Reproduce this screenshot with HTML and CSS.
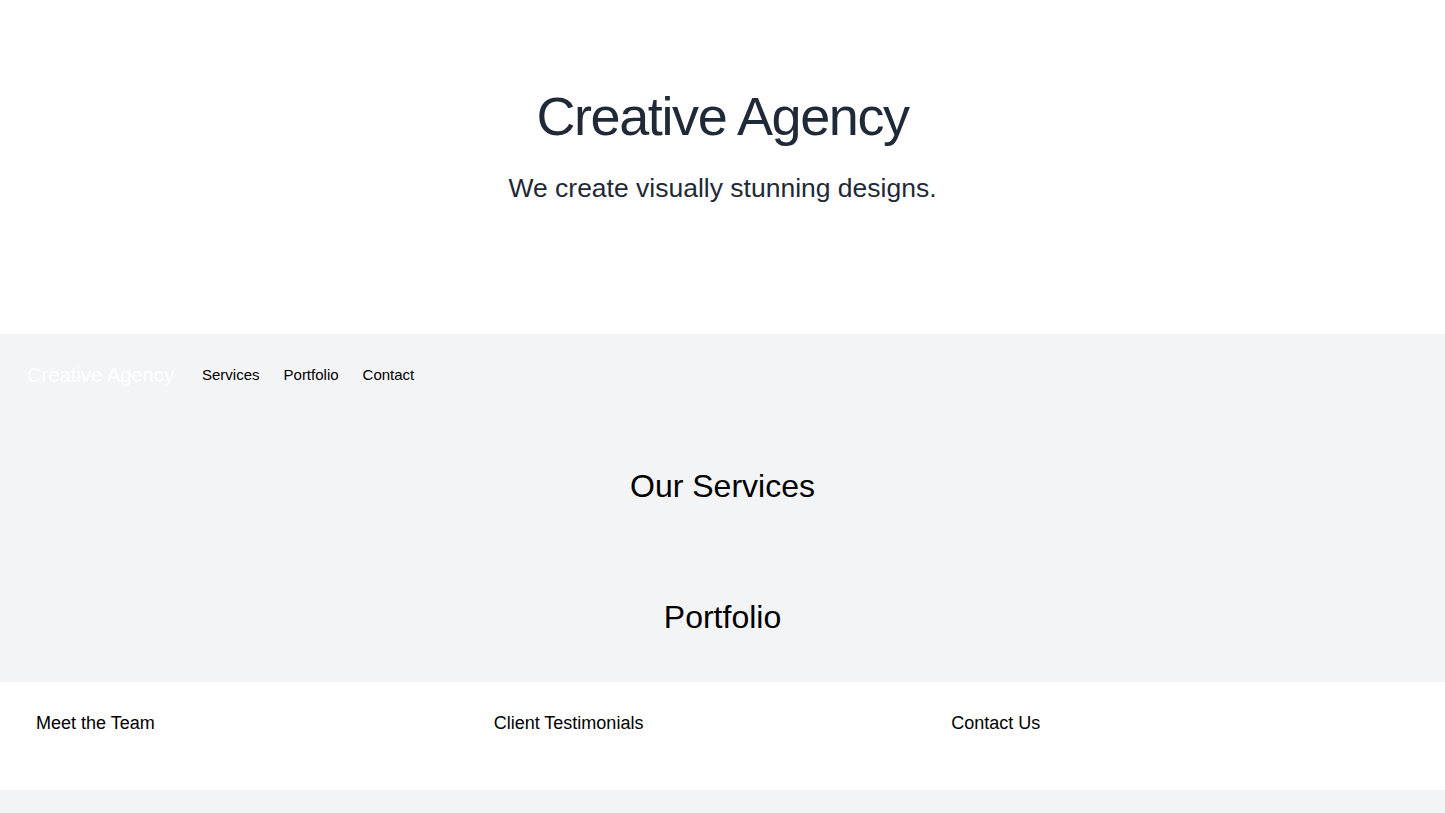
FILE: index.html
```html
<!DOCTYPE html>
<html lang="en">
<head>
<meta charset="utf-8">
<title>Creative Agency</title>
<link rel="stylesheet" href="styles.css">
</head>
<body>
<header class="hero">
  <h1 class="hero-title">Creative Agency</h1>
  <p class="hero-sub">We create visually stunning designs.</p>
</header>
<nav class="nav">
  <a class="nav-brand" href="#">Creative Agency</a>
  <ul class="nav-links">
    <li><a href="#services">Services</a></li>
    <li><a href="#portfolio">Portfolio</a></li>
    <li><a href="#contact">Contact</a></li>
  </ul>
</nav>
<main>
  <section class="section" id="services">
    <h2 class="section-title">Our Services</h2>
  </section>
  <section class="section" id="portfolio">
    <h2 class="section-title">Portfolio</h2>
  </section>
</main>
<footer class="footer" id="contact">
  <div class="footer-col"><h3 class="footer-title">Meet the Team</h3></div>
  <div class="footer-col"><h3 class="footer-title">Client Testimonials</h3></div>
  <div class="footer-col"><h3 class="footer-title">Contact Us</h3></div>
</footer>
</body>
</html>
```
FILE: styles.css
```css
* { box-sizing: border-box; }
html, body { margin: 0; padding: 0; }
body {
  background: #f3f4f6;
  font-family: "Liberation Sans", Arial, sans-serif;
  color: #000;
}
.hero {
  background: #fff;
  text-align: center;
  padding: 89px 0 130px;
  color: #1f2937;
}
.hero-title {
  margin: 0;
  font-size: 54px;
  line-height: 54px;
  font-weight: 400;
  letter-spacing: -1.4px;
}
.hero-sub {
  margin: 29px 0 0;
  font-size: 26.5px;
  line-height: 32px;
}
.nav {
  display: flex;
  align-items: center;
  padding: 27px 27px 31px;
}
.nav-brand {
  color: #fff;
  text-decoration: none;
  font-size: 20.2px;
  line-height: 28px;
}
.nav-links {
  display: flex;
  list-style: none;
  margin: 0 0 0 28px;
  padding: 0;
  gap: 24px;
}
.nav-links a {
  color: #000;
  text-decoration: none;
  font-size: 15px;
  line-height: 20px;
}
.section {
  padding: 46px 0 45px;
  text-align: center;
}
.section-title {
  margin: 0;
  font-size: 32px;
  line-height: 40px;
  font-weight: 400;
}
.footer {
  background: #fff;
  display: grid;
  grid-template-columns: repeat(3, 1fr);
  padding: 27px 36px 53px;
}
.footer-title {
  margin: 0;
  font-size: 18px;
  line-height: 28px;
  font-weight: 400;
}
```
